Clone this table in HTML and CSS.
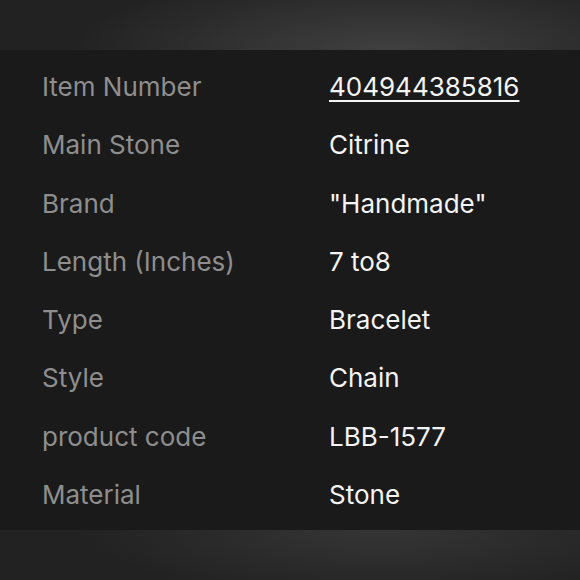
FILE: index.html
```html
<!doctype html>
<html lang="en">
    <head>
        <title>Item specifics</title>
        <meta name="viewport" content="width=device-width, initial-scale=1"/>
        <link rel="stylesheet" href="styles.css">
    </head>
    <body>
        <div class="specs">
            <dl class="specs__list">
                <div class="specs__row">
                    <dt>Item Number</dt>
                    <dd><a href="#" class="specs__link">404944385816</a></dd>
                </div>
                <div class="specs__row">
                    <dt>Main Stone</dt>
                    <dd>Citrine</dd>
                </div>
                <div class="specs__row">
                    <dt>Brand</dt>
                    <dd>"Handmade"</dd>
                </div>
                <div class="specs__row">
                    <dt>Length (Inches)</dt>
                    <dd>7 to8</dd>
                </div>
                <div class="specs__row">
                    <dt>Type</dt>
                    <dd>Bracelet</dd>
                </div>
                <div class="specs__row">
                    <dt>Style</dt>
                    <dd>Chain</dd>
                </div>
                <div class="specs__row">
                    <dt>product code</dt>
                    <dd>LBB-1577</dd>
                </div>
                <div class="specs__row">
                    <dt>Material</dt>
                    <dd>Stone</dd>
                </div>
            </dl>
        </div>
    </body>
</html>
```

FILE: styles.css
```css
html, body {
    height: 100%;
}
body {
    margin: 0;
    padding: 50px 0;
    box-sizing: border-box;
    background-color: #222;
    background-image:
        radial-gradient(ellipse 320px 80px at 390px 50px, #404040, rgba(34,34,34,0)),
        radial-gradient(ellipse 300px 70px at 380px 530px, #353535, rgba(34,34,34,0));
    font-family: Inter, "Liberation Sans", sans-serif;
}
.specs {
    background-color: #1a1a1a;
    height: 480px;
    padding: 8px 0 0;
    box-sizing: border-box;
}
.specs__list {
    margin: 0;
}
.specs__row {
    display: grid;
    grid-template-columns: 287px 1fr;
    padding-left: 42px;
    height: 58.25px;
    line-height: 58px;
    font-size: 26px;
}
.specs__row dt {
    color: #8e8e8e;
}
.specs__row dd {
    margin: 0;
    color: #f4f4f4;
}
.specs__link {
    color: #f4f4f4;
    text-decoration: underline;
    text-decoration-thickness: 2px;
    text-underline-offset: 4px;
}
```
